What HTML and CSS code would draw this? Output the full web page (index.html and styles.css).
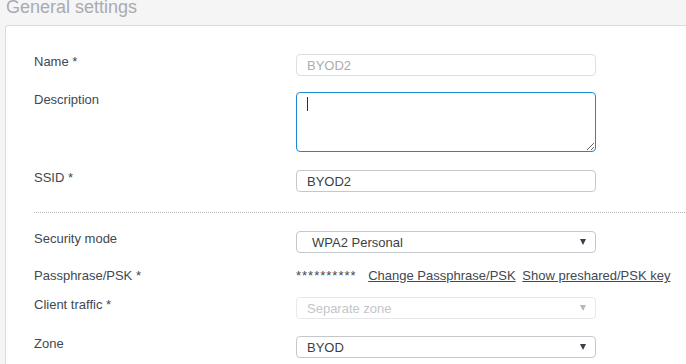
FILE: index.html
```html
<!DOCTYPE html>
<html lang="en">
<head>
    <title>General settings</title>
    <meta charset="utf-8">
    <link rel="stylesheet" href="styles.css">
</head>
<body>

    <h2 class="section-title">General settings</h2>

    <div class="panel">
        <div class="row">
            <label class="field-label">Name *</label>
            <input class="field-input" type="text" value="BYOD2" disabled>
        </div>

        <div class="row row-desc">
            <label class="field-label">Description</label>
            <div class="textarea-wrap">
                <textarea class="field-textarea"></textarea>
                <span class="caret"></span>
            </div>
        </div>

        <div class="row">
            <label class="field-label">SSID *</label>
            <input class="field-input" type="text" value="BYOD2">
        </div>

        <div class="separator"></div>

        <div class="row">
            <label class="field-label">Security mode</label>
            <div class="select-wrap">
                <select class="field-select indent">
                    <option>WPA2 Personal</option>
                </select>
            </div>
        </div>

        <div class="row row-psk">
            <label class="field-label">Passphrase/PSK *</label>
            <div class="psk">
                <span class="stars">**********</span>
                <a href="#" class="link">Change Passphrase/PSK</a>
                <a href="#" class="link">Show preshared/PSK key</a>
            </div>
        </div>

        <div class="row">
            <label class="field-label">Client traffic *</label>
            <div class="select-wrap disabled">
                <select class="field-select" disabled>
                    <option>Separate zone</option>
                </select>
            </div>
        </div>

        <div class="row row-zone">
            <label class="field-label">Zone</label>
            <div class="select-wrap">
                <select class="field-select">
                    <option>BYOD</option>
                </select>
            </div>
        </div>
    </div>

</body>
</html>
```

FILE: styles.css
```css
/* Settings form */
body {
    margin: 0;
    background: #f5f5f5;
    font-family: "Liberation Sans", Arial, sans-serif;
    font-size: 13px;
    color: #414852;
    overflow: hidden;
}
.section-title {
    margin: -4px 0 0 6px;
    height: 22px;
    line-height: 22px;
    font-size: 18px;
    font-weight: normal;
    color: #a9abb0;
}
.panel {
    margin: 7px 0 0 5px;
    width: 800px;
    height: 400px;
    background: #fff;
    border-top: 1px solid #dcdcdc;
    border-left: 1px solid #dcdcdc;
    border-top-left-radius: 3px;
    padding: 28px 0 0 28px;
    box-sizing: border-box;
}
.row {
    display: grid;
    grid-template-columns: 262px 300px;
    align-items: start;
    margin-bottom: 16px;
}
.row-desc {
    margin-bottom: 18px;
}
.row-zone {
    margin-top: 17px;
}
.field-label {
    line-height: 13px;
    padding-top: 1px;
}
.field-input,
.field-select,
.field-textarea {
    box-sizing: border-box;
    width: 300px;
    height: 22px;
    margin: 0;
    border: 1px solid #c4c7cc;
    border-radius: 4px;
    padding: 0 10px;
    font-family: "Liberation Sans", Arial, sans-serif;
    font-size: 13px;
    color: #3a3f47;
    background: #fff;
    outline: none;
}
.field-input:disabled {
    border-color: #dedfe2;
    color: #a9adb3;
}
.textarea-wrap {
    position: relative;
    width: 300px;
    height: 60px;
}
.field-textarea {
    display: block;
    height: 60px;
    border-color: #1e88d2;
    resize: vertical;
}
.caret {
    position: absolute;
    left: 11px;
    top: 5px;
    width: 1px;
    height: 14px;
    background: #333;
}
.separator {
    margin: 20px 0 18px 0;
    border-top: 1px dotted #b8b8b8;
}
.select-wrap {
    position: relative;
    width: 300px;
}
.field-select {
    appearance: none;
    -webkit-appearance: none;
    display: block;
}
.field-select.indent {
    padding-left: 15px;
}
.select-wrap::after {
    content: "";
    position: absolute;
    right: 10px;
    top: 8px;
    border-left: 3px solid transparent;
    border-right: 3px solid transparent;
    border-top: 6px solid #3a3f47;
    pointer-events: none;
}
.select-wrap.disabled .field-select {
    border-color: #dedfe2;
    color: #a9adb3;
}
.select-wrap.disabled::after {
    border-top-color: #b5b8bd;
}
.row-psk {
    margin: -5px 0 11px 0;
    height: 22px;
    align-items: center;
}
.row-psk .field-label {
    padding-top: 0;
}
.psk {
    white-space: nowrap;
    line-height: 13px;
    padding-top: 1px;
}
.stars {
    margin-right: 8px;
    letter-spacing: 1px;
}
.link {
    color: #414852;
    margin-right: 3px;
}
```
